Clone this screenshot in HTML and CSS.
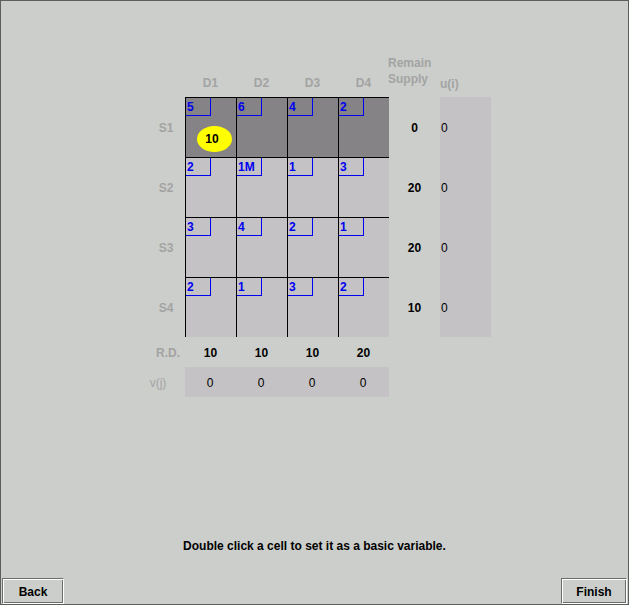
FILE: index.html
```html
<!DOCTYPE html>
<html>
<head>
<meta charset="utf-8">
<link rel="stylesheet" href="styles.css">
</head>
<body>
<div class="frame">
  <div class="table">
    <div class="hd"></div>
    <div class="hd col">D1</div>
    <div class="hd col">D2</div>
    <div class="hd col">D3</div>
    <div class="hd col">D4</div>
    <div class="hd supply">Remain<br>Supply</div>
    <div class="hd ui">u(i)</div>

    <div class="lbl">S1</div>
    <div class="cell dark"><div class="cost">5</div><div class="alloc">10</div></div>
    <div class="cell dark"><div class="cost">6</div></div>
    <div class="cell dark"><div class="cost">4</div></div>
    <div class="cell dark"><div class="cost">2</div></div>
    <div class="val">0</div>
    <div class="uval">0</div>

    <div class="lbl">S2</div>
    <div class="cell"><div class="cost">2</div></div>
    <div class="cell"><div class="cost">1M</div></div>
    <div class="cell"><div class="cost">1</div></div>
    <div class="cell"><div class="cost">3</div></div>
    <div class="val">20</div>
    <div class="uval">0</div>

    <div class="lbl">S3</div>
    <div class="cell"><div class="cost">3</div></div>
    <div class="cell"><div class="cost">4</div></div>
    <div class="cell"><div class="cost">2</div></div>
    <div class="cell"><div class="cost">1</div></div>
    <div class="val">20</div>
    <div class="uval">0</div>

    <div class="lbl">S4</div>
    <div class="cell"><div class="cost">2</div></div>
    <div class="cell"><div class="cost">1</div></div>
    <div class="cell"><div class="cost">3</div></div>
    <div class="cell"><div class="cost">2</div></div>
    <div class="val">10</div>
    <div class="uval">0</div>

    <div class="lbl rd">R.D.</div>
    <div class="val">10</div>
    <div class="val">10</div>
    <div class="val">10</div>
    <div class="val">20</div>
    <div></div>
    <div></div>

    <div class="lbl vj">v(j)</div>
    <div class="vval">0</div>
    <div class="vval">0</div>
    <div class="vval">0</div>
    <div class="vval">0</div>
    <div></div>
    <div></div>
  </div>

  <div class="message">Double click a cell to set it as a basic variable.</div>

  <div class="buttons">
    <button class="btn back">Back</button>
    <button class="btn finish">Finish</button>
  </div>
</div>
</body>
</html>
```

FILE: styles.css
```css
html, body {
  margin: 0;
  padding: 0;
  background: #cccecb;
}

body {
  width: 629px;
  height: 605px;
  font-family: "Liberation Sans", Arial, sans-serif;
  font-size: 12px;
}

.frame {
  box-sizing: border-box;
  width: 629px;
  height: 605px;
  border: 1px solid #5b5f5b;
  background: #cccecb;
  display: flex;
  flex-direction: column;
  padding-top: 50px;
}

.table {
  display: grid;
  grid-template-columns: 38px 51px 51px 51px 51px 51px 51px;
  grid-template-rows: 46px 60px 60px 60px 60px 30px 30px;
  margin-left: 146px;
  width: max-content;
}

.hd {
  color: #a3a3a3;
  font-weight: bold;
  display: flex;
  align-items: flex-end;
  line-height: 14px;
  padding-bottom: 7px;
}

.hd.col {
  justify-content: center;
}

.hd.supply {
  line-height: 16px;
  padding-bottom: 10px;
  margin-left: -1px;
}

.hd.ui {
  padding-bottom: 6px;
}

.lbl {
  color: #a3a3a3;
  font-weight: bold;
  display: flex;
  align-items: center;
  justify-content: center;
  padding-top: 2px;
}

.lbl.rd {
  padding-left: 4px;
}

.lbl.vj {
  font-weight: normal;
  padding-right: 16px;
}

.cell {
  box-sizing: border-box;
  border-left: 1px solid #000;
  border-top: 1px solid #000;
  background: #c4c2c4;
  display: flex;
  flex-direction: column;
  align-items: flex-start;
}

.cell.dark {
  background: #858385;
}

.cost {
  box-sizing: border-box;
  width: 25px;
  height: 18px;
  border-right: 1px solid #0000f0;
  border-bottom: 1px solid #0000f0;
  color: #0000f0;
  font-weight: bold;
  line-height: 16px;
  padding-top: 1px;
  padding-left: 1px;
}

.alloc {
  width: 35px;
  height: 26px;
  margin-top: 10px;
  margin-left: 11px;
  border-radius: 50%;
  background: #ffff00;
  color: #000;
  font-weight: bold;
  display: flex;
  align-items: center;
  justify-content: center;
  padding-right: 5px;
  box-sizing: border-box;
}

.val {
  font-weight: bold;
  color: #000;
  display: flex;
  align-items: center;
  justify-content: center;
  padding-top: 2px;
}

.uval {
  background: #c4c2c4;
  display: flex;
  align-items: center;
  padding-left: 1px;
  padding-top: 2px;
}

.vval {
  background: #c4c2c4;
  display: flex;
  align-items: center;
  justify-content: center;
  padding-right: 1px;
  padding-top: 2px;
}

.message {
  margin-top: auto;
  text-align: center;
  font-weight: bold;
  line-height: 16px;
  margin-bottom: 24px;
  color: #000;
}

.buttons {
  display: flex;
  justify-content: space-between;
  padding: 0 1px;
}

.btn {
  box-sizing: border-box;
  height: 26px;
  margin: 0;
  padding: 2px 0 0 0;
  font-family: "Liberation Sans", Arial, sans-serif;
  font-size: 12px;
  font-weight: bold;
  color: #000;
  background: #cccecb;
  border: 1px solid;
  border-color: #6b6e6b #ffffff #ffffff #6b6e6b;
  box-shadow: inset 1px 1px 0 #ffffff, inset -1px -1px 0 #6b6e6b;
}

.btn.back {
  width: 62px;
}

.btn.finish {
  width: 66px;
}
```
